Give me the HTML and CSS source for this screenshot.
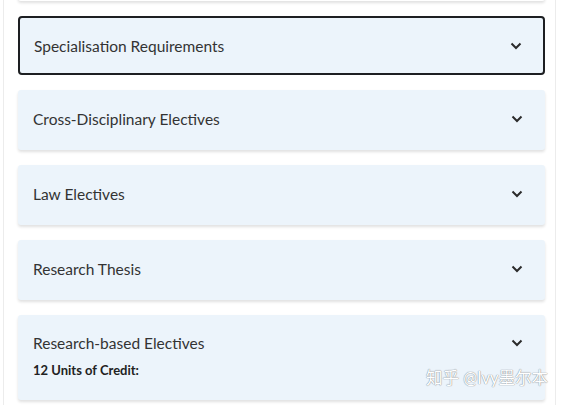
FILE: index.html
```html
<!DOCTYPE html>
<html lang="en">
<head>
    <meta charset="UTF-8">
    <meta name="viewport" content="width=device-width, initial-scale=1.0">
    <title>Program Structure</title>
    <link rel="stylesheet" href="styles.css">
</head>
<body>
    <div class="panel">
        <div class="accordion">
            <div class="card card-prev"></div>

            <div class="card card-active">
                <span class="card-title">Specialisation Requirements</span>
                <svg class="chevron" viewBox="0 0 12 8"><path d="M1.5 1.5 L6 6 L10.5 1.5"/></svg>
            </div>

            <div class="card">
                <span class="card-title">Cross-Disciplinary Electives</span>
                <svg class="chevron" viewBox="0 0 12 8"><path d="M1.5 1.5 L6 6 L10.5 1.5"/></svg>
            </div>

            <div class="card">
                <span class="card-title">Law Electives</span>
                <svg class="chevron" viewBox="0 0 12 8"><path d="M1.5 1.5 L6 6 L10.5 1.5"/></svg>
            </div>

            <div class="card">
                <span class="card-title">Research Thesis</span>
                <svg class="chevron" viewBox="0 0 12 8"><path d="M1.5 1.5 L6 6 L10.5 1.5"/></svg>
            </div>

            <div class="card card-tall">
                <div class="card-head">
                    <span class="card-title">Research-based Electives</span>
                    <svg class="chevron" viewBox="0 0 12 8"><path d="M1.5 1.5 L6 6 L10.5 1.5"/></svg>
                </div>
                <p class="card-sub">12 Units of Credit:</p>
                <span class="watermark">知乎 @Ivy墨尔本</span>
            </div>
        </div>
    </div>
</body>
</html>
```

FILE: styles.css
```css
body {
    margin: 0;
    padding: 0;
    background-color: #fff;
    font-family: Lato, "Noto Sans CJK SC", sans-serif;
}

.panel {
    margin: 0 6px 0 3px;
    height: 405px;
    overflow: hidden;
    border-left: 1px solid #ececec;
    border-right: 1px solid #ececec;
    padding: 0 10px 0 14px;
}

/* список карточек, прокручен вниз */
.accordion {
    display: flex;
    flex-direction: column;
    gap: 15px;
    margin-top: -59px;
}

.card {
    position: relative;
    display: flex;
    align-items: center;
    justify-content: space-between;
    height: 60px;
    box-sizing: border-box;
    padding: 0 22px 3px 15px;
    background-color: #ecf4fb;
    border-radius: 3px;
    box-shadow: 0 2px 3px rgba(0, 0, 0, 0.12);
}

.card-prev {
    background-color: #fff;
}

.card-active {
    height: 59px;
    border: 2px solid #1d1f22;
    border-radius: 4px;
    padding: 0 21px 0 14px;
    box-shadow: none;
}

.card-title {
    font-size: 15.5px;
    color: #333;
}

.chevron {
    width: 12px;
    height: 8px;
    fill: none;
    stroke: #2b2b2b;
    stroke-width: 2;
}

.card-tall {
    display: block;
    height: 85px;
    padding-top: 19px;
}

.card-head {
    display: flex;
    align-items: center;
    justify-content: space-between;
}

.card-sub {
    margin: 10px 0 0;
    font-size: 13px;
    font-weight: bold;
    color: #222;
}

.watermark {
    position: absolute;
    right: -3px;
    bottom: 11px;
    font-size: 16.5px;
    color: #fff;
    text-shadow: 0 0 1px #8a8f94, 0 0 1px #8a8f94;
}
```
